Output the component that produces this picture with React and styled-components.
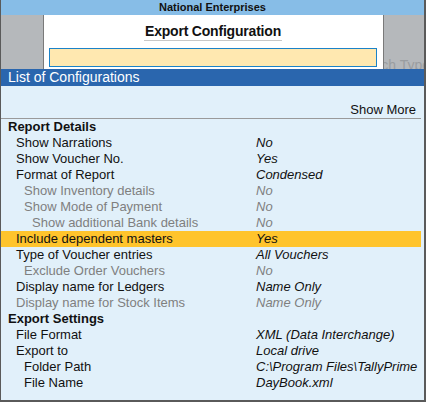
import styled, { createGlobalStyle } from 'styled-components'

const GlobalStyle = createGlobalStyle`
    * { box-sizing: border-box; }
    body {
        margin: 0;
        font-family: "Liberation Sans", Arial, sans-serif;
        background: #ffffff;
    }
`

const Frame = styled.div`
    width: 426px;
    height: 402px;
    display: flex;
    flex-direction: column;
    border-left: 1px solid #5a5a5a;
    border-right: 2px solid #5a5a5a;
    border-bottom: 2px solid #5a5a5a;
    overflow: hidden;
    background: #e1f0fa;
`
const TitleBar = styled.div`
    height: 15px;
    background-color: #87bde7;
    color: #111;
    font-size: 11px;
    font-weight: bold;
    line-height: 15px;
    text-align: center;
`
const HeaderArea = styled.div`
    height: 54px;
    background-color: #b5b8bb;
    display: flex;
    justify-content: center;
    position: relative;
    overflow: hidden;
`
const GhostText = styled.span`
    position: absolute;
    right: -6px;
    bottom: -4px;
    font-size: 14px;
    color: #9a9da0;
`
const Panel = styled.div`
    width: 341px;
    margin-left: 1px;
    background: #ffffff;
    border-left: 1px solid #7a7a7a;
    border-right: 1px solid #7a7a7a;
    display: flex;
    flex-direction: column;
    align-items: center;
    padding-top: 8px;
    position: relative;
    z-index: 1;
`
const Heading = styled.div`
    font-size: 14px;
    font-weight: bold;
    color: #111;
    line-height: 17px;
    letter-spacing: -0.2px;
    border-bottom: 1px solid #c8c8c8;
    padding: 0 1px;
`
const InputBox = styled.div`
    margin-top: 7px;
    width: 328px;
    height: 19px;
    background: #ffe8b0;
    border: 1px solid #1b82c8;
`
const ListBar = styled.div`
    height: 17px;
    background-color: #2a66ae;
    color: #ffffff;
    font-size: 14px;
    line-height: 17px;
    padding-left: 7px;
`
const Body = styled.div`
    flex: 1;
    display: flex;
    flex-direction: column;
`
const ShowMore = styled.div`
    margin-top: 16px;
    height: 16px;
    line-height: 16px;
    font-size: 13px;
    color: #111;
    text-align: right;
    padding-right: 5px;
    margin-right: 3px;
    border-bottom: 1px solid #9a9a9a;
    box-sizing: content-box;
`
const Row = styled.div`
    display: grid;
    grid-template-columns: 255px 1fr;
    height: 16px;
    line-height: 16px;
    font-size: 13px;
    color: ${p => (p.$muted ? '#7f7f7f' : '#111')};
    background: ${p => (p.$active ? '#ffc42c' : 'transparent')};
    margin-right: 3px;
`
const Label = styled.span`
    padding-left: ${p => 7 + p.$level * 8}px;
    font-weight: ${p => (p.$bold ? 'bold' : 'normal')};
    white-space: nowrap;
`
const Value = styled.span`
    font-style: italic;
    white-space: nowrap;
`

const rows = [
    { label: 'Report Details', level: 0, bold: true },
    { label: 'Show Narrations', level: 1, value: 'No' },
    { label: 'Show Voucher No.', level: 1, value: 'Yes' },
    { label: 'Format of Report', level: 1, value: 'Condensed' },
    { label: 'Show Inventory details', level: 2, value: 'No', muted: true },
    { label: 'Show Mode of Payment', level: 2, value: 'No', muted: true },
    { label: 'Show additional Bank details', level: 3, value: 'No', muted: true },
    { label: 'Include dependent masters', level: 1, value: 'Yes', active: true },
    { label: 'Type of Voucher entries', level: 1, value: 'All Vouchers' },
    { label: 'Exclude Order Vouchers', level: 2, value: 'No', muted: true },
    { label: 'Display name for Ledgers', level: 1, value: 'Name Only' },
    { label: 'Display name for Stock Items', level: 1, value: 'Name Only', muted: true },
    { label: 'Export Settings', level: 0, bold: true },
    { label: 'File Format', level: 1, value: 'XML (Data Interchange)' },
    { label: 'Export to', level: 1, value: 'Local drive' },
    { label: 'Folder Path', level: 2, value: 'C:\\Program Files\\TallyPrime' },
    { label: 'File Name', level: 2, value: 'DayBook.xml' },
]

function App() {
    return (
        <>
            <GlobalStyle />
            <Frame>
                <TitleBar>National Enterprises</TitleBar>
                <HeaderArea>
                    <Panel>
                        <Heading>Export Configuration</Heading>
                        <InputBox />
                    </Panel>
                    <GhostText>Batch Type</GhostText>
                </HeaderArea>
                <ListBar>List of Configurations</ListBar>
                <Body>
                    <ShowMore>Show More</ShowMore>
                    {rows.map((r, i) => (
                        <Row key={i} $muted={r.muted} $active={r.active}>
                            <Label $level={r.level} $bold={r.bold}>{r.label}</Label>
                            <Value>{r.value}</Value>
                        </Row>
                    ))}
                </Body>
            </Frame>
        </>
    )
}

export default App
